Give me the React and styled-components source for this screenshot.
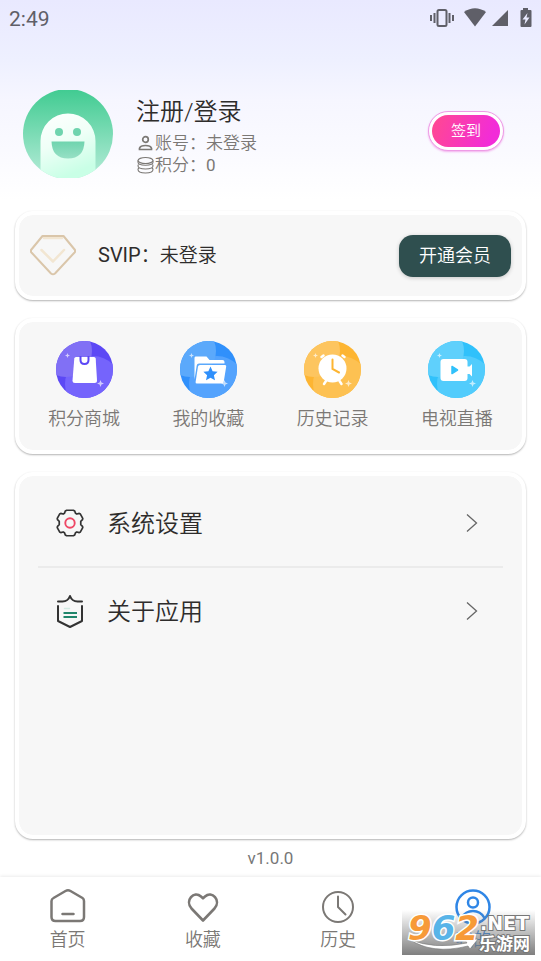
import React from "react";
import styled, { createGlobalStyle } from "styled-components";

const GlobalStyle = createGlobalStyle`
  *, *::before, *::after { box-sizing: border-box; }
  body {
    margin: 0;
    background: #fff;
    font-family: Roboto, "Noto Sans CJK SC", sans-serif;
    font-weight: 350;
    color: #2e2c2b;
  }
  button { font: inherit; border: 0; padding: 0; background: none; color: inherit; cursor: pointer; }
  a { color: inherit; text-decoration: none; }
  p { margin: 0; }
  svg { display: block; flex: none; }
`;

const Page = styled.div`
  position: relative;
  display: flex;
  flex-direction: column;
  min-height: 100vh;
  background: linear-gradient(#e9e9ff 0, #eef0ff 60px, #f6f6ff 100px, #fafaff 150px, #fff 200px);
`;

const StatusBar = styled.div`
  display: flex;
  align-items: center;
  justify-content: space-between;
  height: 36px;
  padding: 0 8px 0 9px;
  color: #5f5f68;
`;

const Clock = styled.time`
  font-size: 21px;
  font-weight: 400;
  line-height: 24px;
  padding-top: 2px;
`;

const StatusIcons = styled.div`
  display: flex;
  align-items: center;
  gap: 9px;
`;

const Profile = styled.header`
  display: flex;
  align-items: center;
  height: 175px;
  padding: 21px 37px 0 23px;
`;

const ProfileInfo = styled.div`
  flex: 1;
  margin-left: 23px;
`;

const LoginButton = styled.button`
  display: block;
  font-size: 24px;
  line-height: 40px;
`;

const InfoLine = styled.p`
  display: flex;
  align-items: center;
  gap: 1px;
  font-size: 17px;
  line-height: 22px;
  color: #7b7875;
`;

const Regular = styled.span`
  font-weight: 400;
`;

const SignButton = styled.button`
  width: 76px;
  height: 40px;
  margin-bottom: 6px;
  border: 1px solid #ee9be6;
  border-radius: 20px;
  padding: 3px;
  background: #fff;
  box-shadow: 0 1px 2px #f3b0ee;
`;

const SignFace = styled.span`
  display: block;
  border-radius: 16px;
  background: linear-gradient(110deg, #ff4794 5%, #f22cd8 85%);
  color: #fff;
  font-size: 15px;
  line-height: 32px;
`;

const Main = styled.main`
  flex: 1;
  display: flex;
  flex-direction: column;
  gap: 18px;
  padding: 0 15px;
`;

const Card = styled.section`
  border: 4px solid #fff;
  border-radius: 18px;
  background: #f7f7f7;
  background-clip: padding-box;
  box-shadow: 0 1px 2px rgba(0, 0, 0, 0.3);
`;

const VipCard = styled(Card)`
  display: flex;
  align-items: center;
  height: 89px;
  padding: 0 11px;
`;

const VipText = styled.p`
  flex: 1;
  margin-left: 22px;
  font-size: 19px;
  line-height: 28px;
`;

const VipName = styled(Regular)`
  font-size: 20px;
`;

const VipButton = styled.button`
  padding: 0 20px;
  border-radius: 14px;
  background: #2f4f4f;
  color: #fff;
  font-size: 18px;
  line-height: 42px;
  box-shadow: 0 1px 4px rgba(0, 0, 0, 0.2);
`;

const ServiceCard = styled(Card)`
  display: grid;
  grid-template-columns: repeat(4, 1fr);
  height: 136px;
  padding: 19px 3px 0;
`;

const ServiceLink = styled.a`
  display: flex;
  flex-direction: column;
  align-items: center;
  gap: 8px;
  font-size: 18px;
  line-height: 26px;
  color: #7b7875;
`;

const MenuCard = styled(Card)`
  flex: 1;
  padding: 4px 19px;
`;

const MenuRow = styled.a`
  display: flex;
  align-items: center;
  height: 86px;
  padding: 0 25px 0 15px;
  font-size: 24px;
  line-height: 34px;

  & + & {
    height: 88px;
    border-top: 2px solid #ebebeb;
  }
`;

const MenuLabel = styled.span`
  flex: 1;
  margin-left: 20px;
  padding-top: 2px;
`;

const Version = styled.p`
  font-size: 17px;
  font-weight: 400;
  line-height: 38px;
  text-align: center;
  color: #777;
`;

const NavBar = styled.nav`
  display: grid;
  grid-template-columns: repeat(4, 1fr);
  height: 84px;
  background: #fff;
  box-shadow: 0 -1px 3px rgba(0, 0, 0, 0.08);
`;

const NavItem = styled.a`
  display: flex;
  flex-direction: column;
  align-items: center;
  padding-top: 10px;
  font-size: 18px;
  line-height: 26px;
  color: ${(p) => (p.$active ? "#2f86e6" : "#7b7875")};
`;

const Watermark = styled.div`
  position: absolute;
  right: 6px;
  bottom: 6px;
  width: 133px;
  height: 45px;
  background: linear-gradient(rgba(120, 120, 120, 0), rgba(120, 120, 120, 0.95));
`;

const MarkText = styled.span`
  position: absolute;
  left: ${(p) => p.$x}px;
  top: ${(p) => p.$y}px;
  font: ${(p) => p.$font};
  color: #fff;
  paint-order: stroke fill;
  -webkit-text-stroke: ${(p) => p.$outline};
  white-space: nowrap;
`;

const Digit = styled.span`
  color: ${(p) => p.$color};
`;

const Swoosh = styled.svg`
  position: absolute;
  left: 6px;
  top: 28px;
`;

const VibrateIcon = () => (
  <svg width="24" height="20" viewBox="0 0 24 20" fill="none" stroke="currentColor" strokeWidth="2">
    <rect x="7.500" y="2" width="9" height="16" rx="1.500" />
    <path d="M4.500 5v10M1 7v6M19.500 5v10M23 7v6" />
  </svg>
);

const SignalIcons = () => (
  <svg width="70" height="20" viewBox="0 0 70 20" fill="currentColor">
    <path d="M1 4.500Q12 -3 23 4.500L12 19Z" transform="translate(0 -.5)" />
    <path d="M29 19 45 3v16Z" transform="translate(0 -1)" />
    <path fillRule="evenodd" d="M60 0h5v2h2.500q1 0 1 1v15q0 1-1 1h-9q-1 0-1-1V3q0-1 1-1H60ZM64.500 5l-5 6.500h3L61.500 16.500l5-7h-3Z" />
  </svg>
);

const Avatar = () => (
  <svg width="90" height="88" viewBox="0 1 90 88" role="img" aria-label="头像">
    <defs>
      <linearGradient id="avatarBg" x2="0" y2="1">
        <stop stopColor="#40cb91" />
        <stop offset="1" stopColor="#b7ecd9" />
      </linearGradient>
      <linearGradient id="avatarBody" x2=".35" y2="1">
        <stop stopColor="#fff" />
        <stop offset=".5" stopColor="#effff7" />
        <stop offset="1" stopColor="#c9ffe6" />
      </linearGradient>
      <linearGradient id="avatarFace" x2="0" y2="1">
        <stop stopColor="#6fd4ae" />
        <stop offset="1" stopColor="#97e0c5" />
      </linearGradient>
      <clipPath id="avatarClip"><circle cx="45" cy="45" r="45" /></clipPath>
    </defs>
    <g clipPath="url(#avatarClip)">
      <path fill="url(#avatarBg)" d="M0 0h90v90H0z" />
      <path fill="url(#avatarBody)" d="M17.500 90V52a27.500 27.500 0 0 1 55 0v38Z" />
    </g>
    <circle cx="36" cy="43" r="4" fill="#6fd4ae" />
    <circle cx="54" cy="43" r="4" fill="#6fd4ae" />
    <path fill="url(#avatarFace)" d="M28.500 52.500h33q-.5 17-16.500 17t-16.500-17Z" />
  </svg>
);

const UserIcon = () => (
  <svg width="18" height="18" viewBox="0 0 18 18" fill="none" stroke="currentColor" strokeWidth="1.700">
    <circle cx="9.500" cy="5.500" r="2.800" />
    <path d="M3.500 15.500v-1.300q1-2.700 6-2.700t6 2.700v1.300Z" />
  </svg>
);

const CoinsIcon = () => (
  <svg width="18" height="18" viewBox="0 0 18 18" fill="none" stroke="currentColor" strokeWidth="1.100">
    <ellipse cx="9.500" cy="4.500" rx="7.500" ry="3" />
    <path d="M2 4.500v1.800q0 2.900 7.500 2.900T17 6.300V4.500M3 8.200Q2 8.700 2 9.800q0 3.200 7.500 3.200T17 9.800q0-1.100-1-1.600M3 12.100q-1 .5-1 1.500 0 3.400 7.500 3.400t7.500-3.400q0-1-1-1.500" />
  </svg>
);

const DiamondIcon = () => (
  <svg width="46" height="42" viewBox="0 0 46 42" fill="none" strokeWidth="2" strokeLinecap="round" strokeLinejoin="round">
    <path stroke="#f2e6d2" strokeWidth="2.500" d="M14 3h18M11.500 15 23 26.500l11-11.500" />
    <path stroke="#dac6aa" d="M12.500 1h21L45 15v2L25 38.500q-2 1.500-4 0L1 17v-2Z" />
  </svg>
);

const serviceGlyphs = {
  shop: (c) => (
    <>
      <path fill="#fff" d="M20 16h18q1.500 0 1.700 1.500l1.300 22q0 2.500-2.500 2.500H19q-2.500 0-2.500-2.500l1.800-22Q18.500 16 20 16Z" />
      <path fill="none" stroke={c} strokeWidth="2" d="M24.500 15v4q0 4 4 4t4-4v-4" />
    </>
  ),
  folder: (c) => (
    <>
      <path fill="#fff" d="M15.500 15.500h11l3 3.500h13q2 0 2 2v1.500H19q-2 0-2.300 2l-2.200 14V17q0-1.500 1-1.500Z" />
      <path fill="#fff" d="M20 24h25q1.500 0 1.200 1.500L43.700 41q-.3 1.500-2 1.500H17q-1.700 0-1.400-1.500L18 25.500q.3-1.500 2-1.500Z" />
      <path fill={c} d="m30.500 25.500 2.100 4.700 5 .6-3.700 3.400 1.100 5-4.500-2.500-4.500 2.500 1.100-5-3.700-3.400 5-.6Z" />
    </>
  ),
  clock: (c) => (
    <>
      <circle cx="28.500" cy="27.500" r="14" fill="#fff" />
      <path fill="none" stroke="#fff" strokeWidth="2.500" strokeLinecap="round" d="m22 40-2 3M35.500 40l2 3M17.500 16l2-1.500M38.500 14.500l2 1.500" />
      <path fill="none" stroke={c} strokeWidth="2" strokeLinecap="round" d="M28.500 18.500V28l6.500 3.500" />
    </>
  ),
  camera: (c) => (
    <>
      <rect x="12.500" y="18" width="27" height="22" rx="3" fill="#fff" />
      <path fill="#fff" d="M39 25.500h2.500l2.500-2.500v12.500L41.500 33H39Z" />
      <path fill={c} stroke={c} strokeLinejoin="round" strokeWidth="1.500" d="m24 25.500 5.500 3.500-5.500 3.500Z" />
    </>
  ),
};

const ServiceIcon = ({ name, color, light, mid }) => (
  <svg width="57" height="57" viewBox="0 0 57 57">
    <defs>
      <clipPath id={`disc-${name}`}><circle cx="28.500" cy="28.500" r="28.500" /></clipPath>
    </defs>
    <g clipPath={`url(#disc-${name})`}>
      <path fill={color} d="M0 0h57v57H0z" />
      <circle cx="37" cy="43" r="28" fill={mid} />
      <circle cx="10" cy="10" r="26" fill={light} />
    </g>
    <path fill="#fff" opacity=".65" d="m11.500 12 .7 1.800 1.800.7-1.800.7-.7 1.800-.7-1.800-1.800-.7 1.800-.7ZM44.500 39l1 2.500 2.500 1-2.500 1-1 2.500-1-2.500-2.500-1 2.500-1Z" />
    {serviceGlyphs[name](color)}
  </svg>
);

const GearIcon = () => (
  <svg width="34" height="34" viewBox="-18 -18 36 36" fill="none" strokeWidth="1.800" strokeLinejoin="round">
    <path
      stroke="#333"
      d="M-3.500-13.500h7l1.500.8.800 2.300 1.500.9 2.500-.7 1.200.7 2.500 4.700-.3 1.300-1.800 1.700v3.600l1.800 1.700.3 1.300-2.500 4.700-1.200.7-2.500-.7-1.500.9-.8 2.300-1.500.8h-7l-1.500-.8-.8-2.300-1.500-.9-2.500.7-1.200-.7-2.500-4.700.3-1.300 1.800-1.700v-3.600l-1.800-1.700-.3-1.300 2.500-4.700 1.200-.7 2.500.7 1.500-.9.8-2.300Z"
    />
    <circle r="5" stroke="#ef4765" strokeWidth="2" />
  </svg>
);

const ShieldIcon = () => (
  <svg width="34" height="36" viewBox="0 0 34 36" fill="none" strokeLinecap="round" strokeLinejoin="round">
    <path stroke="#333" strokeWidth="2" d="M5 8.500h4.500q5.500 0 7.500-5.500 2 5.500 7.500 5.500H29M5 13v15L17 34l12-6V13" />
    <path stroke="#d3ebe3" strokeWidth="1.500" d="M11.500 15.500h5" />
    <path stroke="#20866b" strokeWidth="2" strokeLinecap="butt" d="M10.500 20h13.500M10.500 24h13.500" />
  </svg>
);

const Chevron = () => (
  <svg width="12" height="20" viewBox="0 0 12 20" fill="none" stroke="#666" strokeWidth="1.300">
    <path d="m1 1.500 9.500 8.500L1 18.500" />
  </svg>
);

const navGlyphs = {
  home: <path d="M3.500 11 15.500 4q2.500-1.300 5 0L32.500 11q1.500 1 1.500 3v16q0 4-4 4H5.500q-4 0-4-4V14q0-2 2-3ZM12.500 27h11" strokeWidth="2.500" />,
  heart: <path d="M18 33.500 6.500 21.500C-.5 13 9 3.500 16 9.500l2 1.800 2-1.800c7-6 16.500 3.500 9.500 12Z" strokeWidth="2.600" />,
  history: <path d="M33 20a15 15 0 1 1-30 0 15 15 0 0 1 30 0ZM18 9.500V20l7.500 7.500" strokeWidth="2" />,
  me: (
    <g strokeWidth="2.500">
      <circle cx="18" cy="20" r="16.500" />
      <circle cx="18" cy="15.500" r="5" />
      <path d="M6.500 31q4-7 11.500-7t11.500 7" />
    </g>
  ),
};

const NavIcon = ({ name }) => (
  <svg width="36" height="40" viewBox="0 0 36 40" fill="none" stroke="currentColor" strokeLinecap="round" strokeLinejoin="round">
    {navGlyphs[name]}
  </svg>
);

const services = [
  { name: "shop", label: "积分商城", color: "#5c48f5", light: "#8170f5", mid: "#7564fc" },
  { name: "folder", label: "我的收藏", color: "#3090fb", light: "#5ba9fb", mid: "#54a3fd" },
  { name: "clock", label: "历史记录", color: "#fdb532", light: "#fdc55f", mid: "#fdc152" },
  { name: "camera", label: "电视直播", color: "#30c1fb", light: "#5fd0fc", mid: "#52ccfc" },
];

const tabs = [
  { name: "home", label: "首页" },
  { name: "heart", label: "收藏" },
  { name: "history", label: "历史" },
  { name: "me", label: "我的" },
];

export default function App() {
  return (
    <Page>
      <GlobalStyle />
      <StatusBar>
        <Clock>2:49</Clock>
        <StatusIcons>
          <VibrateIcon />
          <SignalIcons />
        </StatusIcons>
      </StatusBar>
      <Profile>
        <Avatar />
        <ProfileInfo>
          <LoginButton type="button">注册/登录</LoginButton>
          <InfoLine><UserIcon />账号：未登录</InfoLine>
          <InfoLine><CoinsIcon /><span>积分：<Regular>0</Regular></span></InfoLine>
        </ProfileInfo>
        <SignButton type="button"><SignFace>签到</SignFace></SignButton>
      </Profile>
      <Main>
        <VipCard>
          <DiamondIcon />
          <VipText><VipName>SVIP</VipName>：未登录</VipText>
          <VipButton type="button">开通会员</VipButton>
        </VipCard>
        <ServiceCard>
          {services.map((s) => (
            <ServiceLink key={s.name} href={`#${s.name}`}>
              <ServiceIcon {...s} />
              {s.label}
            </ServiceLink>
          ))}
        </ServiceCard>
        <MenuCard>
          <MenuRow href="#settings"><GearIcon /><MenuLabel>系统设置</MenuLabel><Chevron /></MenuRow>
          <MenuRow href="#about"><ShieldIcon /><MenuLabel>关于应用</MenuLabel><Chevron /></MenuRow>
        </MenuCard>
      </Main>
      <Version>v1.0.0</Version>
      <NavBar>
        {tabs.map((t) => (
          <NavItem key={t.name} href={`#tab-${t.name}`} $active={t.name === "me"}>
            <NavIcon name={t.name} />
            {t.label}
          </NavItem>
        ))}
      </NavBar>
      <Watermark>
        <Swoosh width="72" height="14" viewBox="0 0 72 14">
          <path d="M1 1q24 11 58 4l-2-3 13-1-8 10-2-3Q24 17 1 1Z" fill="#fff" stroke="#777" strokeWidth=".6" />
        </Swoosh>
        <MarkText $x={6} $y={1} $font='italic bold 34px/34px "DejaVu Sans", sans-serif' $outline="3px #fff">
          <Digit $color="#f79a38">9</Digit>
          <Digit $color="#58b4e8">6</Digit>
          <Digit $color="#f79a38">2</Digit>
        </MarkText>
        <MarkText $x={78} $y={3} $font='bold 19px/20px "DejaVu Sans", sans-serif' $outline="2px #777">.NET</MarkText>
        <MarkText $x={77} $y={23} $font='bold 17px/20px "Noto Sans CJK SC", sans-serif' $outline="2px #777">乐游网</MarkText>
      </Watermark>
    </Page>
  );
}
